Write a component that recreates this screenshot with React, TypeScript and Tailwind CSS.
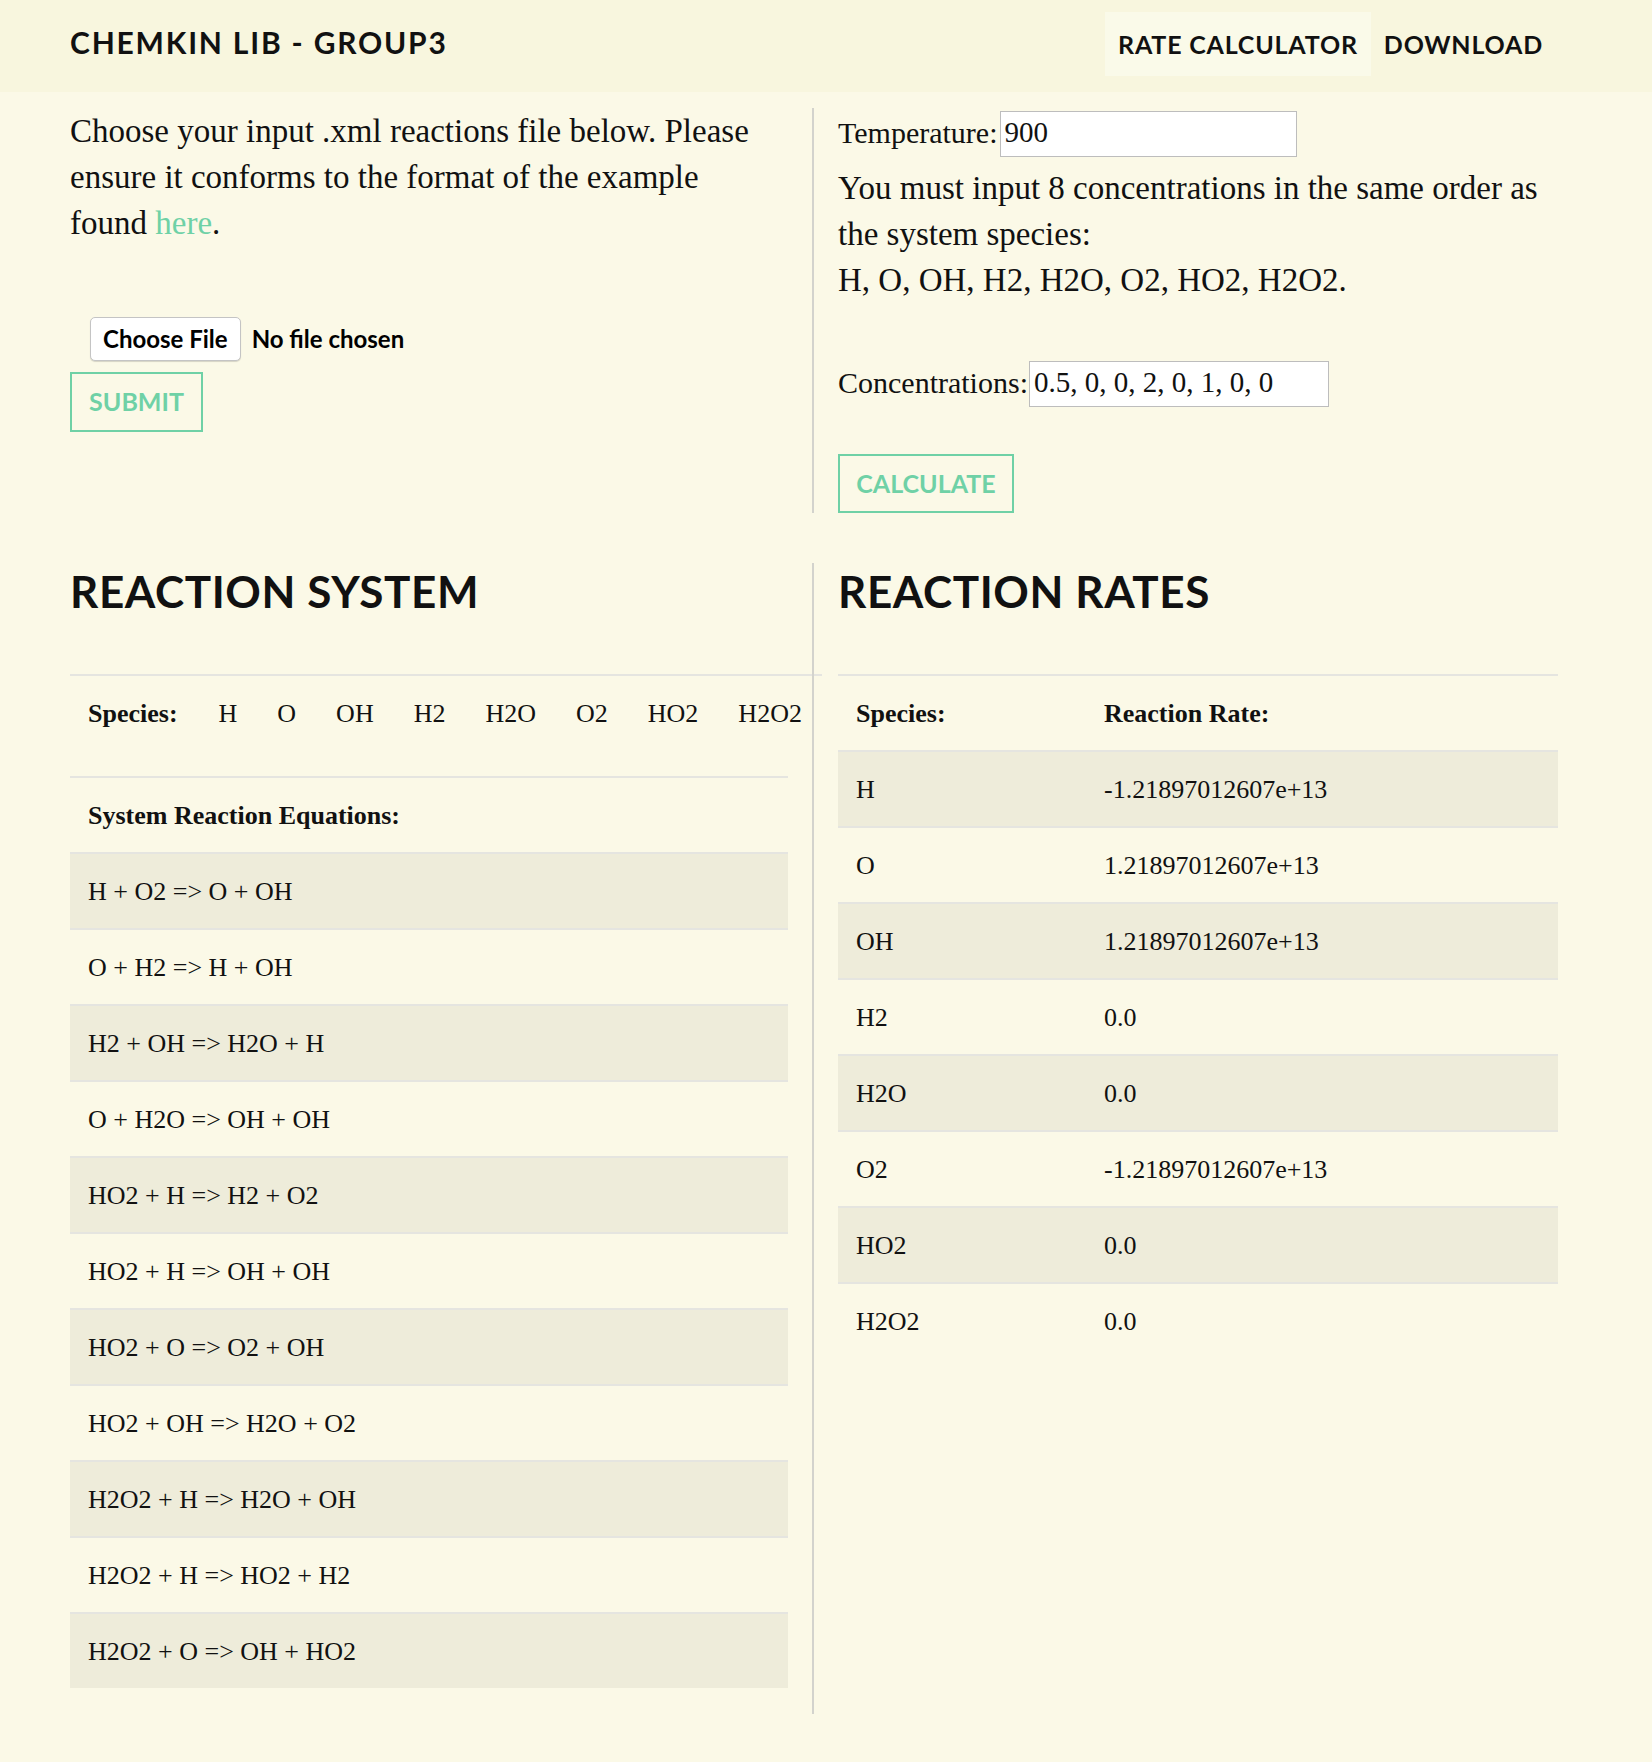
const species = ['H', 'O', 'OH', 'H2', 'H2O', 'O2', 'HO2', 'H2O2'];

const equations = [
  'H + O2 => O + OH',
  'O + H2 => H + OH',
  'H2 + OH => H2O + H',
  'O + H2O => OH + OH',
  'HO2 + H => H2 + O2',
  'HO2 + H => OH + OH',
  'HO2 + O => O2 + OH',
  'HO2 + OH => H2O + O2',
  'H2O2 + H => H2O + OH',
  'H2O2 + H => HO2 + H2',
  'H2O2 + O => OH + HO2',
];

const rates: [string, string][] = [
  ['H', '-1.21897012607e+13'],
  ['O', '1.21897012607e+13'],
  ['OH', '1.21897012607e+13'],
  ['H2', '0.0'],
  ['H2O', '0.0'],
  ['O2', '-1.21897012607e+13'],
  ['HO2', '0.0'],
  ['H2O2', '0.0'],
];

const App = () => {
  return (
    <div className="min-h-[1762px] bg-[#fbf9e7] text-[#111] font-['Liberation_Serif',serif]">
      <header className="h-[92px] bg-[#f8f6de] font-['Lato',sans-serif] font-bold">
        <div className="ml-[70px] flex w-[1486px] items-start justify-between">
          <div className="mt-[24px] text-[30px] leading-[36px] tracking-[1.8px]">CHEMKIN LIB - GROUP3</div>
          <nav className="mt-[12px] flex h-[64px] text-[25px] leading-[30px] tracking-[0.8px]">
            <a className="flex items-center bg-[#fafae9] px-[13px]">RATE CALCULATOR</a>
            <a className="flex items-center px-[13px]">DOWNLOAD</a>
          </nav>
        </div>
      </header>

      <main className="ml-[70px] w-[1488px] pt-[16px]">
        {/* upload + calculator */}
        <div className="flex">
          <div className="w-[742px] pr-[24px]">
            <p className="max-w-[700px] text-[33px] leading-[46px]">
              Choose your input .xml reactions file below. Please ensure it conforms to the format of the example found{' '}
              <a className="text-[#6fd1a6]">here</a>.
            </p>
            <div className="ml-[20px] mt-[71px] flex h-[44px] items-center gap-[11px] font-['Lato',sans-serif] text-[24px] font-bold text-black">
              <button className="h-[44px] rounded-[5px] border border-[#c4c4c4] bg-white px-[12px] shadow-[0_1px_1px_rgba(0,0,0,0.15)]">
                Choose File
              </button>
              <span>No file chosen</span>
            </div>
            <button className="mt-[11px] flex h-[60px] w-[133px] items-center justify-center border-2 border-[#6fd1a6] font-['Lato',sans-serif] text-[25px] font-bold text-[#6fd1a6]">
              SUBMIT
            </button>
          </div>

          <div className="flex-1 border-l-2 border-[#d3d3cd] pl-[24px]">
            <div className="mt-[3px] flex h-[46px] items-center">
              <label className="mb-[4px] text-[30px]">Temperature:</label>
              <input
                readOnly
                value="900"
                className="ml-[3px] h-[46px] w-[297px] border border-[#bdbdbd] bg-white px-[3px] pb-[4px] font-['Liberation_Serif',serif] text-[29px] text-[#111] outline-none"
              />
            </div>
            <p className="mt-[8px] text-[33px] leading-[46px]">
              You must input 8 concentrations in the same order as the system species:
              <br />
              H, O, OH, H2, H2O, O2, HO2, H2O2.
            </p>
            <div className="mt-[58px] flex h-[46px] items-center">
              <label className="mb-[4px] text-[30px]">Concentrations:</label>
              <input
                readOnly
                value="0.5, 0, 0, 2, 0, 1, 0, 0"
                className="ml-[1px] h-[46px] w-[300px] border border-[#bdbdbd] bg-white px-[4px] pb-[4px] font-['Liberation_Serif',serif] text-[29px] text-[#111] outline-none"
              />
            </div>
            <button className="mt-[47px] flex h-[59px] w-[176px] items-center justify-center border-2 border-[#6fd1a6] font-['Lato',sans-serif] text-[25px] font-bold text-[#6fd1a6]">
              CALCULATE
            </button>
          </div>
        </div>

        {/* results */}
        <div className="mt-[50px] flex">
          <div className="w-[742px] pr-[24px] pb-[26px]">
            <h1 className="mt-[2px] font-['Lato',sans-serif] text-[44px] leading-[53px] font-bold tracking-[0.6px]">REACTION SYSTEM</h1>

            <div className="mt-[56px] flex w-max border-t-2 border-[#e5e5e0] text-[26px]">
              <div className="flex h-[74px] items-center pl-[18px] pr-[21px] font-bold">Species:</div>
              {species.map((s) => (
                <div key={s} className="flex h-[74px] items-center px-[20px]">
                  {s}
                </div>
              ))}
            </div>

            <div className="mt-[26px] text-[26px]">
              <div className="flex h-[76px] items-center border-t-2 border-[#e5e5e0] px-[18px] font-bold">
                System Reaction Equations:
              </div>
              {equations.map((eq, i) => (
                <div
                  key={eq + i}
                  className={`flex h-[76px] items-center border-t-2 border-[#e5e5e0] px-[18px] ${i % 2 === 0 ? 'bg-[#eeecda]' : ''}`}
                >
                  {eq}
                </div>
              ))}
            </div>
          </div>

          <div className="flex-1 border-l-2 border-[#d3d3cd] pl-[24px]">
            <h1 className="mt-[2px] font-['Lato',sans-serif] text-[44px] leading-[53px] font-bold tracking-[0.6px]">REACTION RATES</h1>

            <div className="mt-[56px] text-[26px]">
              <div className="grid h-[76px] grid-cols-[230px_1fr] items-center border-t-2 border-[#e5e5e0] px-[18px] font-bold">
                <div>Species:</div>
                <div className="pl-[18px]">Reaction Rate:</div>
              </div>
              {rates.map(([s, r], i) => (
                <div
                  key={s}
                  className={`grid h-[76px] grid-cols-[230px_1fr] items-center border-t-2 border-[#e5e5e0] px-[18px] ${i % 2 === 0 ? 'bg-[#eeecda]' : ''}`}
                >
                  <div>{s}</div>
                  <div className="pl-[18px]">{r}</div>
                </div>
              ))}
            </div>
          </div>
        </div>
      </main>
    </div>
  );
};

export default App;
